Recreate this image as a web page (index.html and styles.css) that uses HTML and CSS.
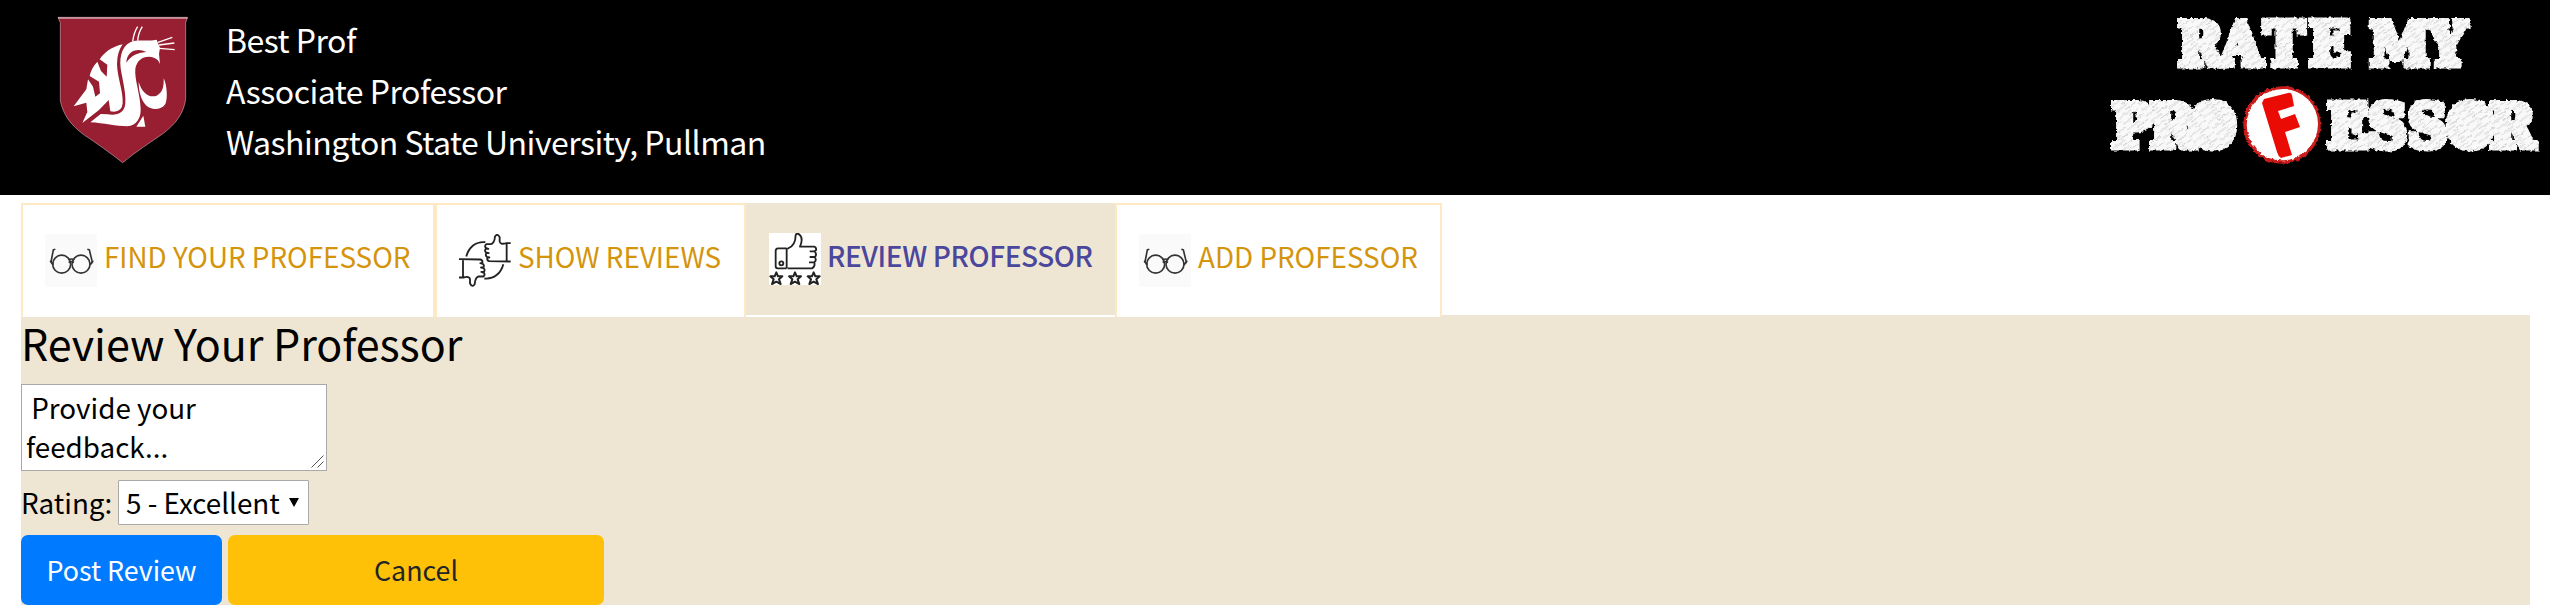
FILE: index.html
```html
<!DOCTYPE html>
<html lang="en">
<head>
<meta charset="utf-8">
<title>Rate My Professor</title>
<link rel="stylesheet" href="styles.css">
</head>
<body>
<svg class="defs" width="0" height="0" aria-hidden="true">
  <symbol id="glasses" viewBox="136 133 156 158">
    <rect x="136" y="133" width="156" height="158" fill="#fafafa"/>
    <g fill="none" stroke="#333" stroke-width="5">
      <circle cx="186" cy="223" r="27"/><circle cx="244" cy="223" r="27"/>
      <path d="M206 210Q215 205 224 210M207 218Q215 213 223 218M167 178L161 180L154 217L160 225M263 178L269 180L278 217L271 225" stroke-width="5"/>
      <path d="M151 213L162 224M281 213L270 224" stroke-width="4"/>
    </g>
  </symbol>
  <symbol id="thumbs" viewBox="90 133 156 158">
    <g id="swap-half" fill="none" stroke="#222" stroke-width="5.500" stroke-linejoin="round">
      <path d="M245 160H232Q213 165 212 155V142Q205 129 198 140C197 155 191 164 184 163H172Q166 168 170 174L178 177H170Q166 184 171 188L179 190H172Q168 197 174 201L181 203H175Q173 212 181 214L245 215M233 160V215"/>
      <path d="M112 200C119 173 140 154 169 157"/>
    </g>
    <use href="#swap-half" transform="rotate(180 167.500 211.500)"/>
  </symbol>
</svg>

<header class="banner">
  <svg class="crest" viewBox="171 50 396 444">
    <path d="M174 54H562L557 70V300C550 345 525 375 490 402C450 430 410 455 368 490C330 460 290 432 250 405C210 375 190 345 181 305V70Z" fill="#981e32" stroke="#c9a0a8" stroke-width="2"/>
    <path d="M174 56H563" stroke="#d0a5ac" stroke-width="5"/>
    <g fill="#fff">
      <path d="M368 135C335 142 312 160 299 180L322 196L320 232L303 215L292 187C279 200 271 218 269 230L297 247L300 282L286 292L279 262L264 240L259 270L221 321L259 310L262 338L247 371L297 332L326 302L331 336Q366 342 368 312C370 275 352 235 351 195Q351 158 368 135Z"/>
      <path d="M402 125C370 132 357 165 362 207C368 245 378 280 376 312C374 342 350 350 322 345L302 344L271 369C310 371 350 381 382 381C411 378 423 355 422 328C420 280 403 240 406 208C410 185 425 172 447 172C466 173 476 182 480 194L477 163L480 146L470 121C446 126 423 121 402 125Z"/>
      <path d="M416 247C425 280 448 297 470 289C488 280 492 262 491 237C502 260 503 300 496 314C485 332 455 335 438 318C422 300 416 275 416 247Z"/>
      <path d="M430 349L436 382H409Z"/>
    </g>
    <path d="M379 190C380 155 412 143 439 158C410 161 393 169 379 190Z" fill="#981e32"/>
    <path d="M398 127Q402 98 413 82M413 124Q415 100 427 82M474 129L517 114M477 137L523 131M478 147L524 151" fill="none" stroke="#fff" stroke-width="4"/>
  </svg>
  <div class="person">
    <div><span class="fit">Best Prof</span></div>
    <div><span class="fit">Associate Professor</span></div>
    <div><span class="fit">Washington State University, Pullman</span></div>
  </div>
  <svg class="logo" viewBox="0 0 460 195">
    <defs>
      <pattern id="chalk" width="23" height="7" patternUnits="userSpaceOnUse" patternTransform="rotate(-36)">
        <rect width="23" height="7" fill="#f9f9f9"/>
        <path d="M0 1H15M10 4.500H23" stroke="#d2d2d2" stroke-width="1"/>
      </pattern>
      <filter id="rough" x="-5%" y="-10%" width="110%" height="120%">
        <feTurbulence type="fractalNoise" baseFrequency=".28" numOctaves="2" seed="4"/>
        <feDisplacementMap in="SourceGraphic" scale="4" xChannelSelector="R" yChannelSelector="G"/>
        <feGaussianBlur stdDeviation=".6"/>
      </filter>
    </defs>
    <g class="chalk" filter="url(#rough)">
      <text x="88 130 174 219" y="65">RATE</text>
      <text x="280 338" y="65">MY</text>
      <text x="22 60 99" y="147">PRO</text>
      <text x="237 278 318 357 400" y="147">ESSOR</text>
      <ellipse cx="123" cy="124" rx="12" ry="18"/><ellipse cx="381" cy="124" rx="12" ry="18"/>
    </g>
    <g filter="url(#rough)"><circle cx="192" cy="125" r="37" fill="#fff" stroke="#cb1f1f" stroke-width="3.500"/></g>
    <circle cx="193" cy="124" r="35" fill="#fff"/>
    <path d="M174 99L198 93Q201 92 202 95L204 106L188 111L191 119L205 114L210 127L195 132L202 155L191 158Q188 156 187 152L172 103Z" fill="#ea0b05"/>
  </svg>
</header>

<main class="page">
  <nav class="tabs">
    <a class="tab t1"><svg class="icon"><use href="#glasses"/></svg><span class="fit">FIND YOUR PROFESSOR</span></a>
    <a class="tab t2"><svg class="icon"><use href="#thumbs"/></svg><span class="fit">SHOW REVIEWS</span></a>
    <a class="tab t3 active">
      <svg class="icon" viewBox="117 129 156 156">
        <rect x="117" y="129" width="156" height="156" fill="#fff"/>
        <g fill="none" stroke="#222" stroke-width="5.500" stroke-linejoin="round">
          <path d="M170 235H143Q137 235 137 229V183Q137 175 144 175H170M170 174V235M173 176C190 170 197 157 197 135Q199 130 206 132C218 140 216 156 210 170H252Q260 172 258 181L253 184H239M254 184Q262 195 254 201H239M254 201Q261 210 253 217H237M253 217Q256 230 246 235H173"/>
          <circle cx="154" cy="220" r="6"/>
          <path id="star" d="M139 247L144 259H157L147 268L152 282L139 275L126 282L131 268L121 259H134Z" stroke-width="6"/>
          <use href="#star" x="56"/><use href="#star" x="112"/>
        </g>
      </svg><span class="fit">REVIEW PROFESSOR</span></a>
    <a class="tab t4"><svg class="icon"><use href="#glasses"/></svg><span class="fit">ADD PROFESSOR</span></a>
  </nav>
  <section class="panel">
    <h1><span class="fit">Review Your Professor</span></h1>
    <div class="feedback"><span> Provide your
feedback...</span>
      <svg class="grip" width="13" height="13" viewBox="0 0 13 13"><path d="M.5 12.500L12.500 .5M6.500 12.500L12.500 6.500" stroke="#555" stroke-width="1"/></svg>
    </div>
    <div class="rating"><span class="label fit">Rating:</span><div class="select"><span class="fit">5 - Excellent</span><svg width="10" height="9" viewBox="0 0 10 9"><path d="M0 0H10L5 9Z"/></svg></div></div>
    <div class="actions"><button class="btn post"><span class="fit">Post Review</span></button><button class="btn cancel"><span class="fit">Cancel</span></button></div>
  </section>
</main>
</body>
</html>
```
FILE: styles.css
```css
* { box-sizing: border-box; }
html, body { height: 100%; }
body {
  margin: 0;
  overflow: hidden;
  background: #fff;
  color: #000;
  font: 27.800px "Noto Sans CJK SC", "Noto Sans", sans-serif;
}
.defs { position: absolute; }
.fit { white-space: nowrap; }

.banner {
  height: 195px;
  padding-left: 57px;
  display: flex;
  align-items: flex-start;
  background: #000;
  color: #fff;
}
.crest { width: 132px; height: 148px; margin-top: 16px; }
.person { margin: 14px 0 0 37px; font-size: 32px; letter-spacing: -.5px; line-height: 51px; }
.logo { width: 460px; height: 195px; margin-left: auto; }
.chalk {
  font: bold 60px "DejaVu Serif Condensed", "DejaVu Serif", serif;
  font-stretch: condensed;
  fill: url(#chalk);
  stroke: url(#chalk);
  stroke-width: 7px;
}

.page { padding: 8px 20px 0 21px; }
.tabs { display: flex; height: 114px; position: relative; z-index: 1; margin-bottom: -2px; }
.tab {
  display: flex;
  height: 114px;
  padding: 29px 0 0 22px;
  border: 2px solid #ffe8c4;
  border-bottom: 0;
  background: #fff;
  color: #d4940c;
  line-height: 45px;
}
.icon { width: 52px; height: 53px; flex: none; margin-right: 7px; }
.t1 { width: 414px; }
.t2 { width: 311px; }
.t3 { width: 369px; }
.t4 { width: 327px; }
.active {
  border: 0;
  border-bottom: 2px solid #fff;
  padding: 30px 0 0 23px;
  background: #eee6d3;
  color: #4a479d;
  font-weight: 500;
  font-size: 28px;
  letter-spacing: -.4px;
}
.active .icon { height: 52px; margin-right: 6px; }

.panel { height: 290px; background: #eee6d3; }
h1 { margin: 0; height: 69px; font-size: 43px; font-weight: 400; line-height: 55px; letter-spacing: -.05px; }
.feedback {
  width: 306px;
  height: 87px;
  padding: 3px 4px;
  position: relative;
  border: 1px solid #a9a9a9;
  background: #fff;
  white-space: pre-wrap;
  line-height: 39px;
}
.feedback > span { margin-left: -1px; }
.grip { position: absolute; right: 2px; bottom: 2px; }
.rating { display: flex; align-items: flex-start; margin-top: 9px; line-height: 45px; }
.label { width: 97px; }
.select {
  width: 191px;
  height: 45px;
  padding: 0 9px 0 7px;
  display: flex;
  align-items: center;
  justify-content: space-between;
  border: 1px solid #a9a9a9;
  border-radius: 1px;
  background: #fff;
}
.actions { display: flex; gap: 6px; margin-top: 10px; }
.btn {
  height: 70px;
  padding: 0;
  border: 0;
  border-radius: 7px;
  font: inherit;
  font-size: 26.800px;
  line-height: 68px;
}
.post { width: 201px; background: #007bff; color: #fff; }
.cancel { width: 376px; background: #ffc107; color: #212529; }
```
